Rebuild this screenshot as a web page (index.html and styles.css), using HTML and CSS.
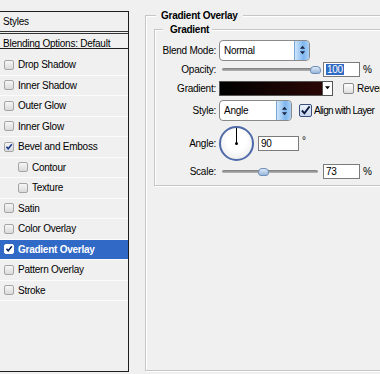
FILE: index.html
```html
<!DOCTYPE html>
<html lang="en">
<head>
  <meta charset="UTF-8" />
  <title>Layer Style - Gradient Overlay</title>
  <link rel="stylesheet" href="styles.css">
</head>
<body>
  <div class="styles-panel">
    <div class="panel-head">Styles</div>
    <div class="blend-row">Blending Options: Default</div>
    <ul class="effects">
      <li><span class="box"></span>Drop Shadow</li>
      <li><span class="box"></span>Inner Shadow</li>
      <li><span class="box"></span>Outer Glow</li>
      <li><span class="box"></span>Inner Glow</li>
      <li><span class="box checked"><svg viewBox="0 0 10 10"><path d="M1.8 4.8 L4 7.3 L8.6 1.6"/></svg></span>Bevel and Emboss</li>
      <li class="sub"><span class="box"></span>Contour</li>
      <li class="sub"><span class="box"></span>Texture</li>
      <li><span class="box"></span>Satin</li>
      <li><span class="box"></span>Color Overlay</li>
      <li class="active"><span class="box checked"><svg viewBox="0 0 10 10"><path d="M1.8 4.8 L4 7.3 L8.6 1.6"/></svg></span>Gradient Overlay</li>
      <li><span class="box"></span>Pattern Overlay</li>
      <li><span class="box"></span>Stroke</li>
    </ul>
  </div>

  <fieldset class="group outer">
    <legend>Gradient Overlay</legend>
    <fieldset class="group inner">
      <legend>Gradient</legend>

      <div class="row row-blend">
        <label>Blend Mode:</label>
        <div class="dropdown wide">
          <span>Normal</span>
          <span class="spin"><svg viewBox="0 0 8 14"><path d="M4 2 L7 5.6 L1 5.6 Z M1 8.4 L7 8.4 L4 12 Z"/></svg></span>
        </div>
      </div>

      <div class="row row-opacity">
        <label>Opacity:</label>
        <div class="slider"><span class="thumb" style="left: 92px"></span></div>
        <div class="num"><span class="sel">100</span></div>
        <span class="unit">%</span>
      </div>

      <div class="row row-gradient">
        <label>Gradient:</label>
        <div class="swatch"></div>
        <div class="swatch-arrow"><svg viewBox="0 0 6 4"><path d="M0 0 L6 0 L3 3.5 Z"/></svg></div>
        <span class="check small"></span>
        <span class="check-label">Reverse</span>
      </div>

      <div class="row row-style">
        <label>Style:</label>
        <div class="dropdown narrow">
          <span>Angle</span>
          <span class="spin"><svg viewBox="0 0 8 14"><path d="M4 2 L7 5.6 L1 5.6 Z M1 8.4 L7 8.4 L4 12 Z"/></svg></span>
        </div>
        <span class="check on"><svg viewBox="0 0 12 12"><path d="M2 6 L4.8 9 L10.5 1.5"/></svg></span>
        <span class="check-label tight">Align with Layer</span>
      </div>

      <div class="row row-angle">
        <label>Angle:</label>
        <div class="dial"><span class="hand"></span><span class="pin"></span></div>
        <div class="num angle">90</div>
        <span class="deg">°</span>
      </div>

      <div class="row row-scale">
        <label>Scale:</label>
        <div class="slider"><span class="thumb" style="left: 40px"></span></div>
        <div class="num">73</div>
        <span class="unit">%</span>
      </div>
    </fieldset>
  </fieldset>
</body>
</html>
```

FILE: styles.css
```css
body {
  margin: 0;
  height: 374px;
  overflow: hidden;
  display: flex;
  align-items: flex-start;
  background-color: #f0f0f0;
  font-family: "Liberation Sans", Arial, sans-serif;
  font-size: 10px;
  letter-spacing: -0.25px;
  color: #000;
}

/* left list of effects */
.styles-panel {
  flex-shrink: 0;
  width: 128px;
  height: 359px;
  margin-top: 11px;
  border-top: 1px solid #1e1e1e;
  border-right: 1px solid #1e1e1e;
  border-bottom: 1px solid #1e1e1e;
  background-color: #f0f0f0;
  white-space: nowrap;
}
.panel-head {
  height: 18px;
  line-height: 18px;
  padding: 1px 0 0 3px;
  border-bottom: 3px double #333;
}
.blend-row {
  height: 11px;
  line-height: 13px;
  padding: 3px 0 0 3px;
  border-bottom: 1px solid #1e1e1e;
}
.effects {
  list-style: none;
  margin: 0;
  padding: 6px 0 0 0;
}
.effects li {
  height: 19.5px;
  line-height: 19.5px;
  border-bottom: 1px solid #fbfbfb;
  display: flex;
  align-items: center;
  padding-left: 4px;
}
.effects li.sub { padding-left: 18px; }
.effects li.active {
  background-color: #3169c6;
  color: #fff;
  font-weight: bold;
}
.box {
  width: 8px;
  height: 8px;
  border: 1px solid #a5a5a5;
  border-radius: 2px;
  background: linear-gradient(#f6f6f6, #dadada);
  margin-right: 4px;
  flex-shrink: 0;
  position: relative;
}
.box svg {
  position: absolute;
  left: 0;
  top: 0;
  width: 8px;
  height: 8px;
}
.box svg path {
  fill: none;
  stroke: #1c3b8f;
  stroke-width: 2;
}
.active .box {
  background: #fff;
  border-color: #fff;
}
.active .box svg path { stroke: #0c2461; }

/* group boxes */
.group {
  margin: 0;
  border: 1px solid #c6c6c6;
  box-shadow: inset 1px 1px 0 #fff, 1px 1px 0 #fff;
  box-sizing: border-box;
  flex-shrink: 0;
}
.group legend {
  font-weight: bold;
  line-height: 13px;
  background-color: #f0f0f0;
}
.outer {
  width: 320px;
  height: 362px;
  margin: 9px 0 0 16px;
  padding: 0 0 0 7px;
}
.outer > legend {
  margin-left: 3px;
  padding: 0 5px;
}
.inner {
  width: 300px;
  height: 163px;
  margin: 1px 0 0 1px;
  padding: 3px 0 0 0;
}
.inner > legend {
  margin-left: 8px;
  padding: 0 3px 0 7px;
}

/* rows */
.row {
  display: flex;
  align-items: center;
  white-space: nowrap;
}
.row label {
  width: 61px;
  margin-right: 4px;
  text-align: right;
  flex-shrink: 0;
}
.row-blend { height: 22px; }
.row-opacity { height: 15px; margin-top: 1px; }
.row-gradient { height: 16px; margin-top: 3px; }
.row-style { height: 21px; margin-top: 4px; }
.row-angle { height: 34px; margin-top: 5px; }
.row-scale { height: 15px; margin-top: 4px; }

.dropdown {
  height: 19px;
  border: 1px solid #8a8a8a;
  border-radius: 4px;
  background-color: #fff;
  display: flex;
  align-items: center;
  justify-content: space-between;
  overflow: hidden;
  margin-left: -1px;
}
.dropdown > span:first-child { padding-left: 4px; }
.dropdown.wide { width: 89px; }
.dropdown.narrow { width: 71px; }
.spin {
  width: 14px;
  height: 19px;
  border-left: 1px solid #7aa6d8;
  background: linear-gradient(to right, #cfe6fb, #7fb6ef 60%, #a9d0f7);
  display: flex;
  align-items: center;
  justify-content: center;
  border-radius: 0 3px 3px 0;
}
.spin svg { width: 7px; height: 12px; }
.spin svg path { fill: #1b2440; }

.slider {
  position: relative;
  width: 96px;
  height: 3px;
  margin-left: 2px;
  margin-right: 5px;
  border-radius: 2px;
  background: linear-gradient(#7a7a7a, #b8b8b8);
}
.thumb {
  position: absolute;
  top: -2px;
  width: 9px;
  height: 6px;
  margin-left: -4px;
  border: 1px solid #6f8fb8;
  border-radius: 4px 4px 3px 3px;
  background: linear-gradient(#dce9f7, #9ab8dd);
}

.num {
  width: 33px;
  height: 13px;
  line-height: 13px;
  border: 1px solid #7b7b7b;
  background-color: #fff;
  padding-left: 2px;
}
.num .sel {
  background-color: #316ac5;
  color: #fff;
  padding: 0 1px;
}
.num.angle {
  width: 37px;
  margin-left: 4px;
}
.unit { margin-left: 3px; }
.deg {
  margin-left: 3px;
  align-self: flex-start;
  margin-top: 9px;
}

.swatch {
  width: 102px;
  height: 13px;
  margin-left: -1px;
  border: 1px solid #555;
  background: linear-gradient(to right, #000, #2a0606);
}
.swatch-arrow {
  width: 9px;
  height: 13px;
  border: 1px solid #555;
  border-left: none;
  background-color: #fff;
  display: flex;
  align-items: center;
  justify-content: center;
}
.swatch-arrow svg { width: 5px; height: 4px; }

.check {
  width: 11px;
  height: 11px;
  border: 1px solid #8c8c8c;
  border-radius: 2px;
  background: linear-gradient(#fff, #dedede);
  flex-shrink: 0;
}
.check.small {
  width: 9px;
  height: 9px;
  margin-left: 10px;
}
.check.on {
  margin-left: 7px;
  border-color: #3a4f80;
  background: linear-gradient(#eef3fb, #c7d6ee);
}
.check svg { display: block; width: 11px; height: 11px; }
.check svg path {
  fill: none;
  stroke: #0d1b40;
  stroke-width: 2;
}
.check-label { margin-left: 3px; }
.check-label.tight {
  margin-left: 2px;
  letter-spacing: -0.65px;
}

.dial {
  position: relative;
  width: 31px;
  height: 31px;
  margin-left: -1px;
  border: 2px solid #4f6aa8;
  border-radius: 50%;
  background: radial-gradient(circle at 50% 40%, #fff 40%, #e4e4e4);
}
.hand {
  position: absolute;
  left: 15px;
  top: 0;
  width: 1px;
  height: 16px;
  background-color: #000;
}
.pin {
  position: absolute;
  left: 14px;
  top: 14px;
  width: 3px;
  height: 3px;
  border-radius: 50%;
  background-color: #000;
}
```
